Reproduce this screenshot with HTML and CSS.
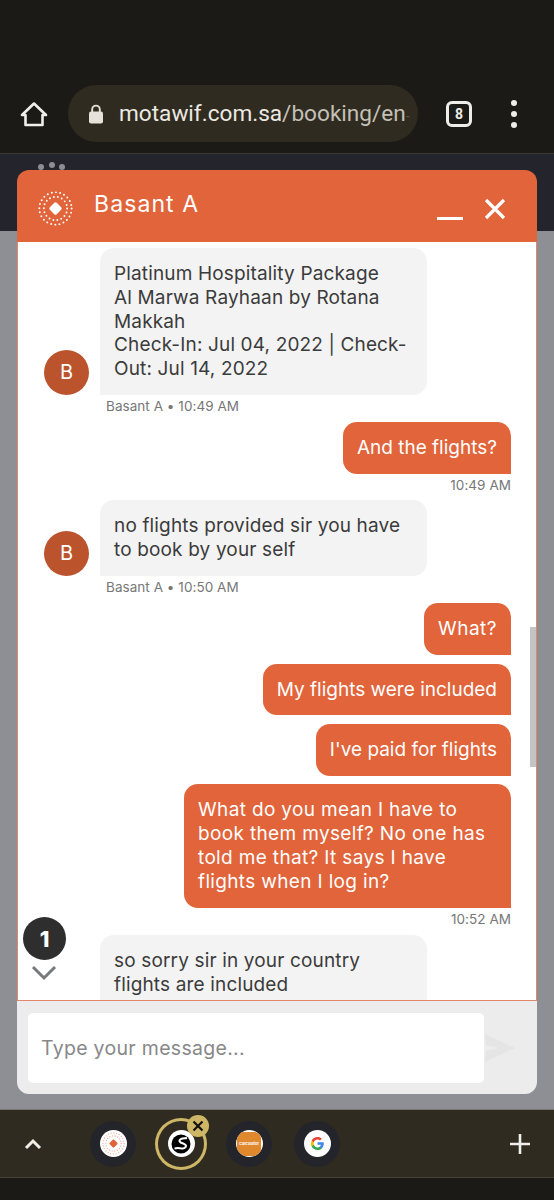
FILE: index.html
```html
<!DOCTYPE html>
<html lang="en">
<head>
    <meta charset="UTF-8">
    <meta name="viewport" content="width=device-width, initial-scale=1.0">
    <title>Chat with Basant A</title>
    <link rel="stylesheet" href="styles.css">
</head>
<body>
    <svg class="sprites" width="0" height="0">
        <symbol id="logo" viewBox="0 0 36 36">
            <circle class="logo-ring" cx="18" cy="18" r="16.6" fill="none" stroke="currentColor" stroke-width="2" stroke-linecap="round" stroke-dasharray="0 4.346"/>
            <circle class="logo-ring" cx="18" cy="18" r="12" fill="none" stroke="currentColor" stroke-width="2" stroke-linecap="round" stroke-dasharray="0 4.19"/>
            <rect x="13" y="13" width="10" height="10" rx="1.8" fill="currentColor" transform="rotate(45 18 18)"/>
        </symbol>
    </svg>

    <header class="toolbar">
        <svg class="home-icon" viewBox="0 0 28 28" width="28" height="28">
            <path d="M2 15 14 3.5 26 15h-3.5v10h-17V15z" fill="none" stroke="#f1efe9" stroke-width="2.6" stroke-linejoin="round"/>
        </svg>
        <div class="url-pill">
            <svg viewBox="0 0 16 20" width="16" height="20">
                <path d="M4.2 8V5.4a3.8 3.8 0 0 1 7.6 0V8" fill="none" stroke="#e6e2da" stroke-width="1.9"/>
                <rect x="1" y="7.5" width="14" height="12" rx="2" fill="#e6e2da"/>
            </svg>
            <span class="url"><span class="host">motawif.com.sa</span>/booking/en<span class="url-fade">-</span></span>
        </div>
        <div class="tab-count">8</div>
        <div class="more-dots"><i></i><i></i><i></i></div>
    </header>

    <main class="page">
        <svg class="page-logo" viewBox="0 0 36 14" width="36" height="14">
            <circle cx="8" cy="9" r="3" fill="#8d8e95"/>
            <circle cx="19" cy="7" r="3" fill="#8d8e95"/>
            <circle cx="29" cy="9" r="3" fill="#8d8e95"/>
        </svg>

        <section class="chat">
            <div class="chat-head">
                <svg class="head-logo"><use href="#logo"/></svg>
                <span class="agent-name">Basant A</span>
                <span class="head-actions">
                    <i class="minimize"></i>
                    <svg viewBox="0 0 22 22" width="22" height="22">
                        <path d="M2 2l18 18M20 2 2 20" stroke="#fff" stroke-width="3.2"/>
                    </svg>
                </span>
            </div>

            <div class="messages">
                <div class="msg in">
                    <div class="avatar">B</div>
                    <div class="bubble">Platinum Hospitality Package<br>Al Marwa Rayhaan by Rotana<br>Makkah<br>Check-In: Jul 04, 2022 | Check-<br>Out: Jul 14, 2022</div>
                </div>
                <div class="meta in-meta">Basant A • 10:49 AM</div>

                <div class="msg out"><div class="bubble">And the flights?</div></div>
                <div class="meta out-meta first-time">10:49 AM</div>

                <div class="msg in">
                    <div class="avatar">B</div>
                    <div class="bubble">no flights provided sir you have<br>to book by your self</div>
                </div>
                <div class="meta in-meta wide">Basant A • 10:50 AM</div>

                <div class="msg out near"><div class="bubble what">What?</div></div>
                <div class="msg out near"><div class="bubble">My flights were included</div></div>
                <div class="msg out near"><div class="bubble">I've paid for flights</div></div>
                <div class="msg out"><div class="bubble long">What do you mean I have to<br>book them myself? No one has<br>told me that? It says I have<br>flights when I log in?</div></div>
                <div class="meta out-meta">10:52 AM</div>

                <div class="msg in">
                    <div class="bubble">so sorry sir in your country<br>flights are included</div>
                </div>

                <div class="scrollbar"></div>
                <div class="unread">1</div>
                <svg class="unread-arrow" viewBox="0 0 26 16" width="26" height="16">
                    <path d="M2 2l11 11L24 2" fill="none" stroke="#77797b" stroke-width="3"/>
                </svg>
            </div>

            <div class="composer">
                <div class="composer-input">Type your message...</div>
                <svg viewBox="0 0 30 28" width="30" height="28">
                    <path d="M0 0l30 14L0 28l1-11 13-3-13-3z" fill="#e5e5e5"/>
                </svg>
            </div>
        </section>
    </main>

    <footer class="bubble-bar">
        <svg class="bar-chevron" viewBox="0 0 18 12" width="18" height="12">
            <path d="M2 10l7-7 7 7" fill="none" stroke="#f1efe9" stroke-width="3"/>
        </svg>
        <div class="heads">
            <div class="head"><span class="face"><svg class="face-logo"><use href="#logo"/></svg></span></div>
            <div class="head active">
                <span class="face">
                    <svg viewBox="0 0 20 20" width="20" height="20">
                        <circle cx="10" cy="10" r="9.5" fill="#000"/>
                        <path d="M16 4c-3 .5-7 0-7.5 2.5S12 9 14 10.500s.5 4-2.500 4-4-1-8 0" fill="none" stroke="#fff" stroke-width="2"/>
                    </svg>
                </span>
                <span class="dismiss">
                    <svg viewBox="0 0 12 12" width="12" height="12">
                        <path d="M1.5 1.5l9 9M10.5 1.5l-9 9" stroke="#111" stroke-width="2.2"/>
                    </svg>
                </span>
            </div>
            <div class="head"><span class="face"><span class="orange-app">Calculator</span></span></div>
            <div class="head">
                <span class="face">
                    <svg viewBox="0 0 18 18" width="13" height="13">
                        <path fill="#4285f4" d="M17.64 9.2c0-.637-.057-1.251-.164-1.84H9v3.481h4.844c-.209 1.125-.843 2.078-1.796 2.717v2.258h2.908c1.702-1.567 2.684-3.874 2.684-6.615z"/>
                        <path fill="#34a853" d="M9 18c2.43 0 4.467-.806 5.956-2.18l-2.908-2.259c-.806.54-1.837.86-3.048.86-2.344 0-4.328-1.584-5.036-3.711H.957v2.332C2.438 15.983 5.482 18 9 18z"/>
                        <path fill="#fbbc05" d="M3.964 10.71c-.18-.54-.282-1.117-.282-1.71s.102-1.17.282-1.71V4.958H.957C.347 6.173 0 7.548 0 9s.348 2.827.957 4.042l3.007-2.332z"/>
                        <path fill="#ea4335" d="M9 3.58c1.321 0 2.508.454 3.44 1.345l2.582-2.58C13.463.891 11.426 0 9 0 5.482 0 2.438 2.017.957 4.958L3.964 7.29C4.672 5.163 6.656 3.58 9 3.58z"/>
                    </svg>
                </span>
            </div>
        </div>
        <svg class="bar-plus" viewBox="0 0 20 20" width="20" height="20">
            <path d="M10 0v20M0 10h20" stroke="#f1efe9" stroke-width="2.6"/>
        </svg>
    </footer>
    <div class="nav-strip"></div>
</body>
</html>
```

FILE: styles.css
```css
:root {
    --brand: #e2643a;
    --chrome: #1c1a17;
    --chrome-light: #2f2b20;
}

* {
    box-sizing: border-box;
}

body {
    margin: 0;
    width: 554px;
    height: 1200px;
    overflow: hidden;
    display: flex;
    flex-direction: column;
    background: var(--chrome);
    font-family: "Inter", "Open Sans", sans-serif;
}

.sprites {
    position: absolute;
}

.logo-ring {
    opacity: var(--ring-opacity, 1);
}

/* browser toolbar */
.toolbar {
    flex: none;
    height: 154px;
    padding: 85px 0 11px 20px;
    display: flex;
    align-items: center;
    background: var(--chrome);
    border-bottom: 1px solid #3a3935;
}

.home-icon {
    flex: none;
}

.url-pill {
    flex: none;
    width: 350px;
    height: 57px;
    margin-left: 20px;
    padding-left: 20px;
    display: flex;
    align-items: center;
    gap: 15px;
    background: var(--chrome-light);
    border-radius: 29px;
}

.url {
    white-space: nowrap;
    font-family: "Roboto", sans-serif;
    font-size: 22.6px;
    color: #c4c0b7;
}

.host {
    color: #ece9e2;
}

.url-fade {
    color: #57534a;
    font-size: 14px;
}

.tab-count {
    flex: none;
    width: 26px;
    height: 26px;
    margin-left: 28px;
    border: 3px solid #efede7;
    border-radius: 6px;
    display: flex;
    align-items: center;
    justify-content: center;
    font-family: "Roboto", sans-serif;
    font-size: 14px;
    font-weight: 700;
    color: #efede7;
}

.more-dots {
    flex: none;
    margin-left: 39px;
    display: flex;
    flex-direction: column;
    gap: 5px;
}

.more-dots i {
    width: 6px;
    height: 6px;
    border-radius: 50%;
    background: #efede7;
}

/* dimmed site behind the chat */
.page {
    flex: none;
    position: relative;
    height: 955px;
    padding: 16px 17px 0;
    background: linear-gradient(#23242c 77px, #8e8f94 77px);
}

.page-logo {
    position: absolute;
    top: 4px;
    left: 33px;
}

.chat {
    position: relative;
    height: 924px;
    display: flex;
    flex-direction: column;
    border-radius: 12px;
    overflow: hidden;
}

.chat-head {
    flex: none;
    height: 72px;
    display: flex;
    align-items: center;
    padding: 0 31px 0 21px;
    background: var(--brand);
    color: #fff;
}

.head-logo {
    width: 35px;
    height: 35px;
    margin-top: 4px;
    color: #fff;
}

.agent-name {
    margin: -4px 0 0 21px;
    font-size: 23px;
    letter-spacing: 1.1px;
}

.head-actions {
    margin-left: auto;
    display: flex;
    align-items: flex-end;
    gap: 21px;
    padding-top: 5px;
}

.minimize {
    width: 26px;
    height: 3px;
    background: #fff;
}

.messages {
    flex: 1;
    position: relative;
    min-height: 0;
    overflow: hidden;
    padding: 6px 25px 0 26px;
    background: #fff;
    border: solid #e2876a;
    border-width: 0 1px 1px;
}

.msg {
    display: flex;
    align-items: flex-end;
    margin-left: 56px;
}

.msg.out {
    justify-content: flex-end;
    margin-left: 0;
}

.msg.near {
    margin-bottom: 8.7px;
}

.avatar {
    flex: none;
    width: 45px;
    height: 45px;
    margin-left: -56px;
    margin-right: 11px;
    display: flex;
    align-items: center;
    justify-content: center;
    border-radius: 50%;
    background: #bb532c;
    color: #fff;
    font-size: 20px;
}

.bubble {
    padding: 14px;
    font-size: 19px;
    line-height: 23.75px;
    white-space: nowrap;
    border-radius: 14px;
}

.in .bubble {
    width: 327px;
    background: #f3f3f3;
    color: #3b3b3b;
    letter-spacing: 0.15px;
    border-bottom-left-radius: 0;
}

.out .bubble {
    background: var(--brand);
    color: #fff;
    border-bottom-right-radius: 0;
}

.out .bubble.long {
    width: 327px;
    line-height: 24px;
    letter-spacing: 0.35px;
}

.out .bubble.what {
    letter-spacing: 0.5px;
}

.meta {
    height: 17px;
    margin: 3px 0 7px;
    font-size: 13.5px;
    line-height: 17px;
    letter-spacing: 0.05px;
    color: #777;
}

.in-meta {
    margin-left: 62px;
}

.in-meta.wide {
    margin-bottom: 7.6px;
}

.out-meta {
    text-align: right;
}

.out-meta.first-time {
    margin-bottom: 6.5px;
}

.scrollbar {
    position: absolute;
    top: 385px;
    right: 0;
    width: 6px;
    height: 140px;
    background: #c4c4c4;
}

.unread {
    position: absolute;
    top: 675px;
    left: 5px;
    width: 43px;
    height: 43px;
    display: flex;
    align-items: center;
    justify-content: center;
    border-radius: 50%;
    background: #2e2e2e;
    color: #fff;
    font-size: 22px;
    font-weight: 800;
}

.unread-arrow {
    position: absolute;
    top: 723px;
    left: 13px;
}

.composer {
    flex: none;
    height: 93px;
    padding: 12px 22px 11px 11px;
    display: flex;
    align-items: center;
    gap: 1px;
    background: #ececec;
}

.composer-input {
    width: 456px;
    height: 70px;
    padding-left: 13px;
    display: flex;
    align-items: center;
    background: #fff;
    border-radius: 5px;
    font-size: 19.5px;
    letter-spacing: 0.3px;
    color: #888;
}

/* chrome tab bubbles */
.bubble-bar {
    flex: none;
    height: 69px;
    display: flex;
    align-items: center;
    padding: 0 24px;
    background: var(--chrome-light);
    border-top: 1px solid #77756e;
    border-bottom: 1px solid #45423a;
}

.bar-chevron {
    flex: none;
}

.heads {
    display: flex;
    gap: 22px;
    margin-left: 48px;
}

.head {
    position: relative;
    width: 46px;
    height: 46px;
    display: flex;
    align-items: center;
    justify-content: center;
    border-radius: 50%;
    background: #24252b;
}

.head.active {
    background: none;
    box-shadow: 0 0 0 3px #cdb766;
    border-radius: 50%;
}

.face {
    width: 27px;
    height: 27px;
    display: flex;
    align-items: center;
    justify-content: center;
    border-radius: 50%;
    background: #fff;
    overflow: hidden;
}

.face-logo {
    width: 23px;
    height: 23px;
    color: #e2643a;
    --ring-opacity: 0.55;
}

.orange-app {
    width: 24px;
    height: 24px;
    display: flex;
    align-items: center;
    justify-content: center;
    border-radius: 6px;
    background: #e0882d;
    color: #fff;
    font-size: 4px;
    font-weight: 700;
}

.dismiss {
    position: absolute;
    top: -6px;
    right: -5px;
    width: 22px;
    height: 22px;
    display: flex;
    align-items: center;
    justify-content: center;
    border-radius: 50%;
    background: #cdb766;
}

.bar-plus {
    flex: none;
    margin-left: auto;
}

.nav-strip {
    flex: 1;
    background: var(--chrome);
}
```
